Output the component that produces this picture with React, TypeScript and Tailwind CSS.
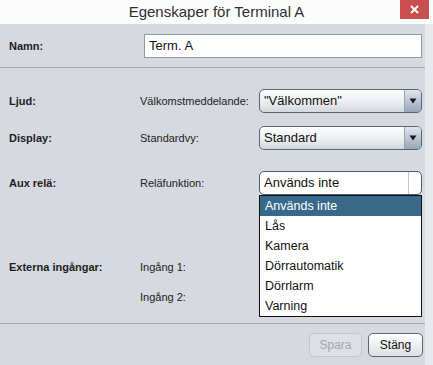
import React from 'react'

const font = { fontFamily: '"Liberation Sans", Arial, sans-serif' }

function Arrow() {
  return (
    <svg width="8" height="6" viewBox="0 0 8 6" className="block">
      <path d="M0.5 0.5 H7.5 L4 5.5 Z" fill="#1a1a1a" />
    </svg>
  )
}

function Combo({ value }: { value: string }) {
  return (
    <div className="flex h-[24px] w-[163px] items-stretch overflow-hidden rounded-[5px] border border-[#5a6574] bg-gradient-to-b from-[#fdfdfe] via-[#eef0f3] to-[#d3d8de]">
      <div className="flex flex-1 items-center pl-[4px] text-[13px] text-[#111]">{value}</div>
      <div className="flex w-[17px] items-center justify-center border-l border-[#9aa4b0] bg-gradient-to-b from-[#dfe5ec] via-[#bcc7d4] to-[#95a5b9]">
        <Arrow />
      </div>
    </div>
  )
}

function Row({ label, sub, children }: { label: string; sub?: string; children?: React.ReactNode }) {
  return (
    <div className="flex h-[24px] items-center">
      <div className="w-[140px] pl-[9px] text-[11px] font-bold text-[#1e1e1e]">{label}</div>
      <div className="w-[119px] text-[11px] text-[#222]">{sub}</div>
      {children}
    </div>
  )
}

const items = ['Används inte', 'Lås', 'Kamera', 'Dörrautomatik', 'Dörrlarm', 'Varning']

export default function App() {
  return (
    <div className="flex h-[365px] w-[433px] flex-col overflow-hidden bg-[#eceef1]" style={font}>
      {/* Title bar */}
      <div className="relative flex h-[24px] items-center justify-center bg-[#fcfcfc]">
        <span className="text-[15px] text-[#2f2f2f]">Egenskaper för Terminal A</span>
        <div className="absolute right-[4px] top-0 flex h-[19px] w-[29px] items-center justify-center bg-[#c94f4f]">
          <svg width="9" height="9" viewBox="0 0 9 9">
            <path d="M1 1 L8 8 M8 1 L1 8" stroke="#fff" strokeWidth="1.8" />
          </svg>
        </div>
      </div>

      <div className="flex flex-1">
        <div className="relative flex flex-1 flex-col bg-[#d6d9df]">
          {/* Namn */}
          <div className="mt-[10px] flex h-[24px] items-center">
            <div className="w-[144px] pl-[9px] text-[11px] font-bold text-[#1e1e1e]">Namn:</div>
            <div className="flex h-[24px] w-[278px] items-center border border-[#8f98a4] bg-white pl-[4px] text-[13px] text-[#111]">
              Term. A
            </div>
          </div>

          <div className="mt-[9px] h-px bg-[#a3a8af]" />

          <div className="mt-[21px]">
            <Row label="Ljud:" sub="Välkomstmeddelande:">
              <Combo value={'"Välkommen"'} />
            </Row>
          </div>
          <div className="mt-[13px]">
            <Row label="Display:" sub="Standardvy:">
              <Combo value="Standard" />
            </Row>
          </div>
          <div className="mt-[21px]">
            <Row label="Aux relä:" sub="Reläfunktion:">
              <div className="flex h-[24px] w-[163px] items-stretch rounded-[5px] border border-[#4c5d72] bg-white">
                <div className="flex flex-1 items-center pl-[4px] text-[13px] text-[#111]">Används inte</div>
                <div className="w-[13px] border-l border-[#c3c8cf]" />
              </div>
            </Row>
          </div>

          <div className="mt-[60px]">
            <Row label="Externa ingångar:" sub="Ingång 1:" />
          </div>
          <div className="mt-[6px]">
            <Row label="" sub="Ingång 2:" />
          </div>

          <div className="mt-[14px] h-px bg-[#a3a8af]" />

          {/* Buttons */}
          <div className="mt-[9px] flex justify-end gap-[6px] pr-[2px]">
            <div className="flex h-[24px] w-[53px] items-center justify-center rounded-[5px] border border-[#c2c6cc] bg-[#dde0e4] text-[12px] text-[#a3a7ad]">
              Spara
            </div>
            <div className="flex h-[24px] w-[55px] items-center justify-center rounded-[5px] border border-[#5b6470] bg-gradient-to-b from-[#ffffff] to-[#dcdfe4] text-[12px] text-[#111]">
              Stäng
            </div>
          </div>

          {/* Open dropdown list */}
          <div className="absolute left-[259px] top-[171px] w-[163px] border border-[#111] bg-white">
            {items.map((it, i) => (
              <div
                key={it}
                className={
                  i === 0
                    ? 'flex h-[20px] items-center bg-[#39698a] pl-[5px] text-[12.5px] text-white'
                    : 'flex h-[20px] items-center pl-[5px] text-[12.5px] text-[#111]'
                }
              >
                {it}
              </div>
            ))}
          </div>
        </div>
        <div className="w-[8px] bg-[#e9eaec]" />
      </div>
    </div>
  )
}
